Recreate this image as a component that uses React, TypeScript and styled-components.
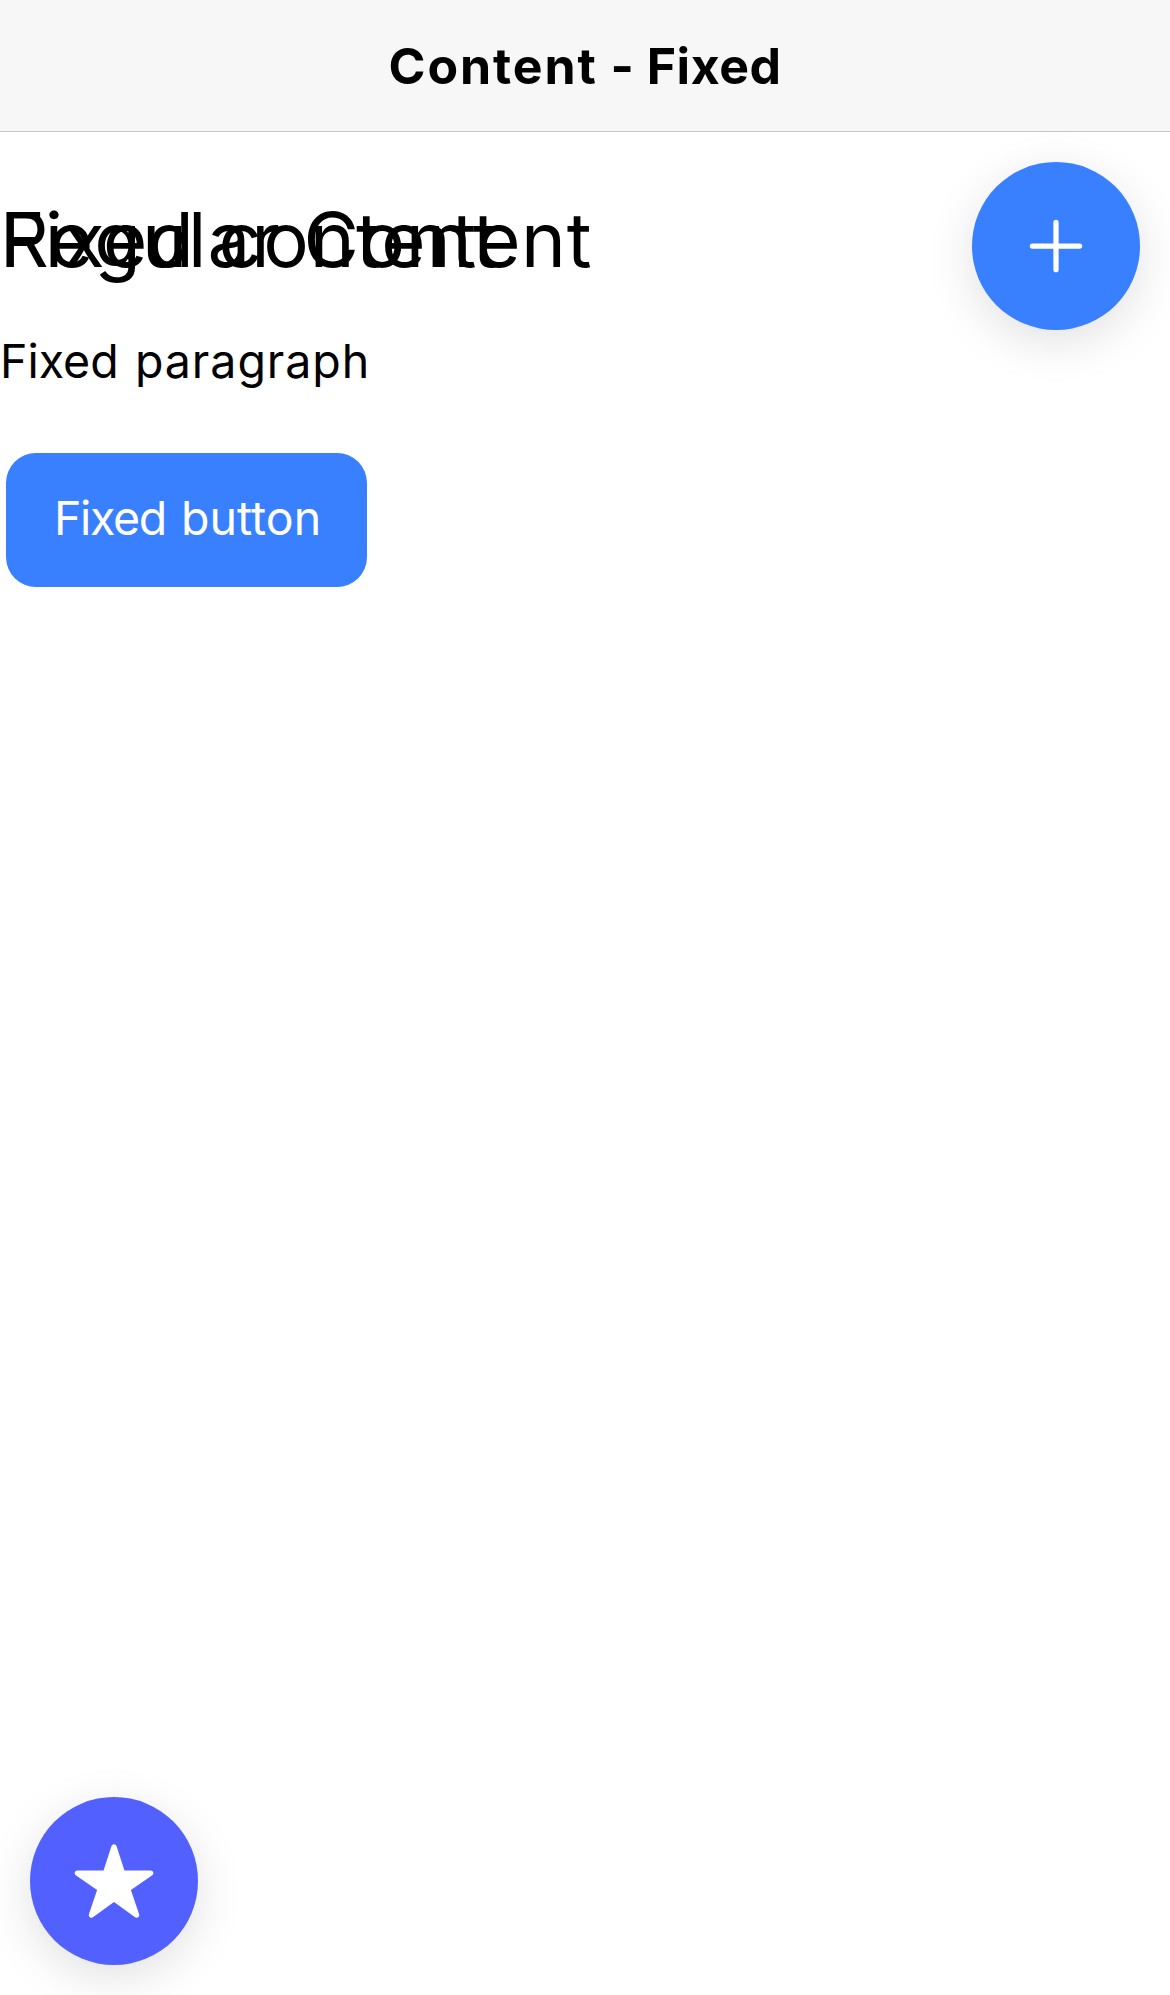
import React from "react";
import styled, { createGlobalStyle } from "styled-components";

const GlobalStyle = createGlobalStyle`
  * { box-sizing: border-box; }
  body {
    margin: 0;
    background: #fff;
    color: #000;
    font-family: Inter, Roboto, sans-serif;
    overflow: hidden;
  }
`;

const Page = styled.div`
  display: flex;
  flex-direction: column;
  height: 1995px;
`;

const Header = styled.header`
  flex: none;
  display: flex;
  align-items: center;
  justify-content: center;
  height: 132px;
  background: #f7f7f7;
  border-bottom: 1px solid #c6c6c6;
`;

const Title = styled.div`
  font-size: 50px;
  line-height: 60px;
  font-weight: 700;
  word-spacing: 1px;
  white-space: nowrap;
`;

const Word = styled.span<{ $tracking: number }>`
  letter-spacing: ${(p) => p.$tracking}px;
`;

const Content = styled.main`
  position: relative;
  flex: 1;
  overflow: hidden;
`;

const FixedLayer = styled.div`
  position: absolute;
  inset: 0;
`;

const Heading = styled.h1<{ $gap: number }>`
  margin: 60px 0 30px;
  font-size: 76px;
  line-height: 94px;
  font-weight: 400;
  word-spacing: ${(p) => p.$gap}px;
  white-space: nowrap;
`;

const Paragraph = styled.p`
  margin: 0;
  padding-top: 16px;
  font-size: 46.5px;
  line-height: 58px;
  word-spacing: 3.2px;
`;

const Button = styled.button`
  display: block;
  width: 361px;
  height: 134px;
  margin: 63px 0 0 6px;
  padding: 0 0 4px 2px;
  border: 0;
  border-radius: 30px;
  background: #3880ff;
  color: #fff;
  font-family: inherit;
  font-size: 46.5px;
  text-align: center;
  word-spacing: 2.1px;
  white-space: nowrap;
`;

const Fab = styled.button<{ $tertiary?: boolean }>`
  position: absolute;
  ${(p) => (p.$tertiary ? "left: 30px; bottom: 30px;" : "right: 30px; top: 30px;")}
  display: flex;
  align-items: center;
  justify-content: center;
  width: 168px;
  height: 168px;
  padding: 0;
  border: 0;
  border-radius: 50%;
  background: ${(p) => (p.$tertiary ? "#5260ff" : "#3880ff")};
  color: #fff;
  box-shadow: 0 12px 48px rgba(0, 0, 0, 0.12);
`;

const Icon = styled.svg`
  display: block;
  width: 84px;
  height: 84px;
`;

export default function App() {
  return (
    <Page>
      <GlobalStyle />
      <Header>
        <Title>
          <Word $tracking={1.9}>Content</Word> - <Word $tracking={0.5}>Fixed</Word>
        </Title>
      </Header>
      <Content>
        <Heading $gap={1}>
          <Word $tracking={1.1}>Regular</Word> <Word $tracking={0.65}>Content</Word>
        </Heading>
        <FixedLayer>
          <Heading $gap={3.3}>
            Fixed <Word $tracking={1.15}>content</Word>
          </Heading>
          <Paragraph>
            Fixed <Word $tracking={0.95}>paragraph</Word>
          </Paragraph>
          <Button>
            <Word $tracking={-1.35}>Fixed</Word> button
          </Button>
        </FixedLayer>
        <Fab aria-label="Add">
          <Icon viewBox="0 0 512 512" fill="none" stroke="currentColor" strokeWidth="32" strokeLinecap="round">
            <path d="M256 112v288M400 256H112" />
          </Icon>
        </Fab>
        <Fab $tertiary aria-label="Favorite">
          <Icon viewBox="0 0 512 512" fill="currentColor">
            <path d="M394 480a16 16 0 01-9.39-3L256 383.76 127.39 477a16 16 0 01-24.55-18.08L153 310.35 23 221.2a16 16 0 019-29.2h160.38l48.4-148.95a16 16 0 0130.44 0l48.4 149H480a16 16 0 019.05 29.2L359 310.35l50.13 148.53A16 16 0 01394 480z" />
          </Icon>
        </Fab>
      </Content>
    </Page>
  );
}
